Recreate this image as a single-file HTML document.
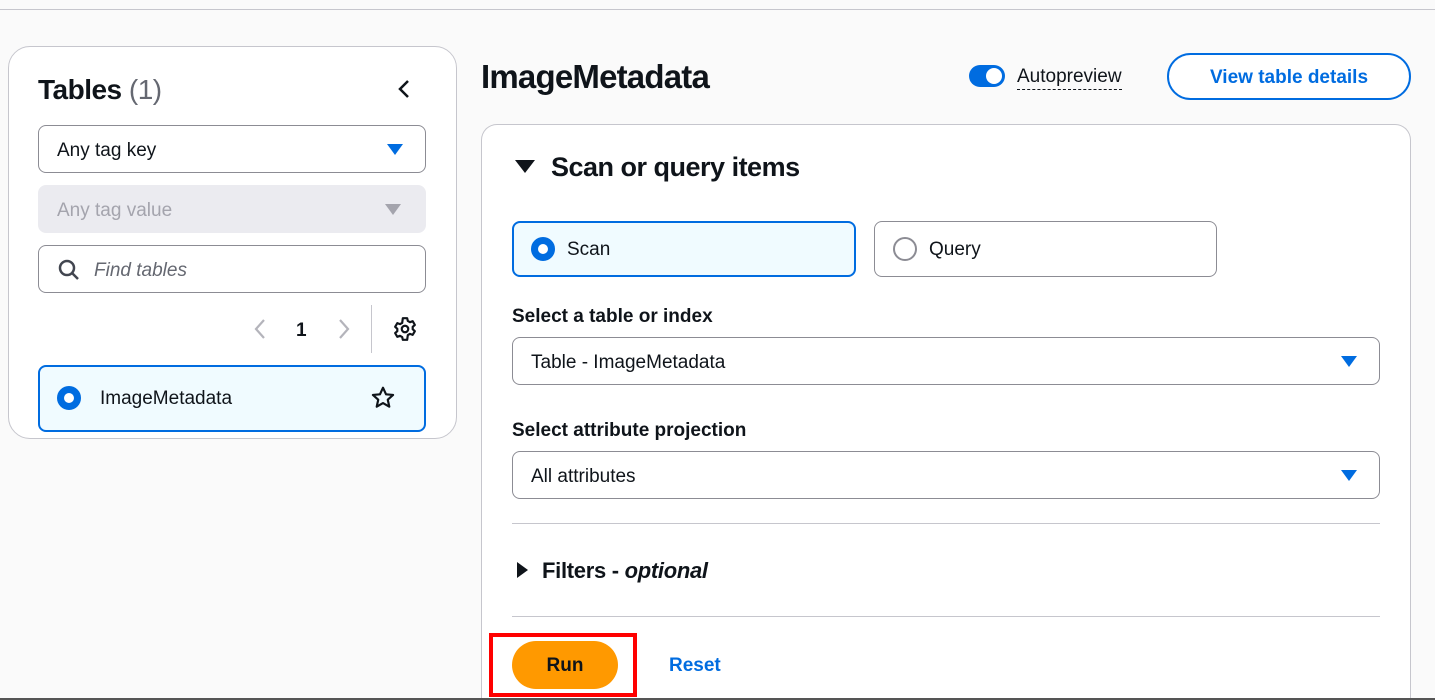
<!DOCTYPE html>
<html><head><meta charset="utf-8"><style>
*{box-sizing:border-box;margin:0;padding:0}
html,body{width:1435px;height:700px;overflow:hidden}
body{background:#fafafa;font-family:"Liberation Sans",sans-serif;color:#0f141a;position:relative}
.a{position:absolute}
.box{position:absolute;border:1px solid #8c8c94;border-radius:8px;background:#fff;font-size:19px;display:flex;align-items:center;padding-left:18px;padding-top:3px}
.tri{position:absolute;width:0;height:0;border-left:8px solid transparent;border-right:8px solid transparent;border-top:11px solid #006ce0}
</style></head><body>
<div class="a" style="left:0;top:9px;width:1435px;height:1px;background:#c6c6cd"></div>

<!-- left panel -->
<div class="a" style="left:8px;top:46px;width:449px;height:393px;border:1px solid #c6c6cd;border-radius:22px;background:#fff"></div>
<div class="a" style="left:38px;top:74px;font-size:28px;font-weight:bold;letter-spacing:-0.5px">Tables <span style="color:#656871;font-weight:normal">(1)</span></div>
<svg class="a" style="left:396px;top:79px" width="18" height="20"><path d="M12 2 L4 10 L12 18" fill="none" stroke="#0f141a" stroke-width="2.5"/></svg>
<div class="box" style="left:38px;top:125px;width:388px;height:48px">Any tag key</div>
<div class="tri" style="left:387px;top:144px"></div>
<div class="box" style="left:38px;top:185px;width:388px;height:48px;background:#ebebf0;border-color:#ebebf0;color:#a4a4ad">Any tag value</div>
<div class="tri" style="left:385px;top:204px;border-top-color:#a4a4ad"></div>
<div class="box" style="left:38px;top:245px;width:388px;height:48px;padding-left:55px;color:#656871;font-style:italic">Find tables</div>
<svg class="a" style="left:57px;top:258px" width="24" height="24"><circle cx="10" cy="10" r="7" fill="none" stroke="#424650" stroke-width="2.5"/><path d="M15 15 L21 21" stroke="#424650" stroke-width="2.5"/></svg>
<svg class="a" style="left:252px;top:318px" width="16" height="22"><path d="M12 2 L4 11 L12 20" fill="none" stroke="#b4b4bb" stroke-width="2.2"/></svg>
<div class="a" style="left:296px;top:320px;font-size:19px;font-weight:bold">1</div>
<svg class="a" style="left:336px;top:318px" width="16" height="22"><path d="M4 2 L12 11 L4 20" fill="none" stroke="#b4b4bb" stroke-width="2.2"/></svg>
<div class="a" style="left:371px;top:305px;width:1px;height:48px;background:#c6c6cd"></div>
<svg class="a" style="left:392px;top:316px" width="26" height="26" viewBox="0 0 24 24"><path d="M10 2h4l.6 2.6 2 1.1 2.5-.9 2 3.4-2 1.8v2.2l2 1.8-2 3.4-2.5-.9-2 1.1L14 22h-4l-.6-2.6-2-1.1-2.5.9-2-3.4 2-1.8v-2.2l-2-1.8 2-3.4 2.5.9 2-1.1z" fill="none" stroke="#0f141a" stroke-width="2" stroke-linejoin="round"/><circle cx="12" cy="12" r="3" fill="none" stroke="#0f141a" stroke-width="2"/></svg>
<div class="a" style="left:38px;top:365px;width:388px;height:67px;border:2px solid #006ce0;border-radius:8px;background:#f0fbff"></div>
<div class="a" style="left:57px;top:386px;width:24px;height:24px;border-radius:50%;border:7px solid #006ce0;background:#fff"></div>
<div class="a" style="left:100px;top:388px;font-size:19px">ImageMetadata</div>
<svg class="a" style="left:370px;top:385px" width="26" height="26" viewBox="0 0 24 24"><path d="M12 2.5l2.8 6.1 6.5.6-4.9 4.4 1.4 6.4L12 16.7l-5.8 3.3 1.4-6.4-4.9-4.4 6.5-.6z" fill="none" stroke="#0f141a" stroke-width="2" stroke-linejoin="round"/></svg>

<!-- header -->
<div class="a" style="left:481px;top:58px;font-size:33px;font-weight:bold;letter-spacing:-0.8px">ImageMetadata</div>
<div class="a" style="left:969px;top:65px;width:36px;height:22px;border-radius:11px;background:#006ce0"></div>
<div class="a" style="left:986px;top:68px;width:16px;height:16px;border-radius:50%;background:#fff"></div>
<div class="a" style="left:1017px;top:65px;font-size:19px;border-bottom:1px dashed #0f141a;line-height:24px">Autopreview</div>
<div class="a" style="left:1167px;top:53px;width:244px;height:47px;border:2px solid #006ce0;border-radius:24px;color:#006ce0;font-weight:bold;font-size:19px;display:flex;align-items:center;justify-content:center;background:#fff;padding-top:2px">View table details</div>

<!-- main card -->
<div class="a" style="left:481px;top:124px;width:930px;height:576px;border:1px solid #c6c6cd;border-bottom:none;border-radius:16px 16px 0 0;background:#fff"></div>
<div class="a" style="left:515px;top:160px;width:0;height:0;border-left:10px solid transparent;border-right:10px solid transparent;border-top:13px solid #0f141a"></div>
<div class="a" style="left:551px;top:152px;font-size:27px;font-weight:bold;letter-spacing:-0.5px">Scan or query items</div>

<div class="a" style="left:512px;top:221px;width:344px;height:56px;border:2px solid #006ce0;border-radius:8px;background:#f0fbff"></div>
<div class="a" style="left:531px;top:237px;width:24px;height:24px;border-radius:50%;border:7px solid #006ce0;background:#fff"></div>
<div class="a" style="left:567px;top:239px;font-size:19px">Scan</div>
<div class="a" style="left:874px;top:221px;width:343px;height:56px;border:1px solid #8c8c94;border-radius:8px"></div>
<div class="a" style="left:893px;top:237px;width:24px;height:24px;border-radius:50%;border:2px solid #8c8c94"></div>
<div class="a" style="left:929px;top:239px;font-size:19px">Query</div>

<div class="a" style="left:512px;top:306px;font-size:19px;font-weight:bold">Select a table or index</div>
<div class="box" style="left:512px;top:337px;width:868px;height:48px">Table - ImageMetadata</div>
<div class="tri" style="left:1341px;top:356px"></div>
<div class="a" style="left:512px;top:420px;font-size:19px;font-weight:bold">Select attribute projection</div>
<div class="box" style="left:512px;top:451px;width:868px;height:48px">All attributes</div>
<div class="tri" style="left:1341px;top:470px"></div>

<div class="a" style="left:512px;top:523px;width:868px;height:1px;background:#c6c6cd"></div>
<div class="a" style="left:517px;top:562px;width:0;height:0;border-top:8px solid transparent;border-bottom:8px solid transparent;border-left:11px solid #0f141a"></div>
<div class="a" style="left:542px;top:558px;font-size:22px;font-weight:bold;letter-spacing:-0.3px">Filters - <i>optional</i></div>
<div class="a" style="left:512px;top:616px;width:868px;height:1px;background:#c6c6cd"></div>

<div class="a" style="left:489px;top:633px;width:148px;height:64px;border:4px solid #f00"></div>
<div class="a" style="left:512px;top:641px;width:106px;height:48px;border-radius:24px;background:#ff9900;font-weight:bold;font-size:19px;display:flex;align-items:center;justify-content:center;padding-top:2px">Run</div>
<div class="a" style="left:669px;top:655px;font-size:19px;font-weight:bold;color:#006ce0">Reset</div>
<div class="a" style="left:0;top:698px;width:1435px;height:2px;background:#555"></div>
</body></html>
